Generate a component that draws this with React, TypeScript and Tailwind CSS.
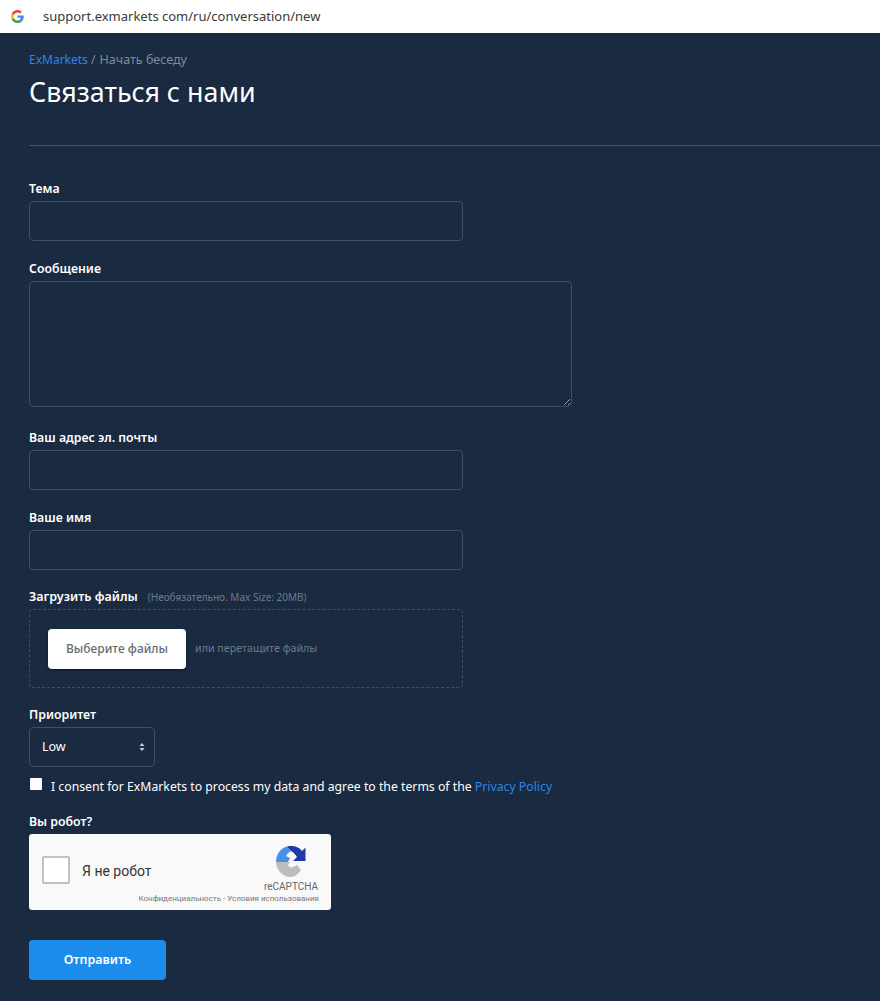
const font = "font-['Noto_Sans','Open_Sans',sans-serif]";
const inputClass =
  "block h-10 w-[434px] rounded border border-[#3d4f68] bg-transparent px-3 text-[13px] text-white outline-none";

function FieldLabel({ children }: { children: React.ReactNode }) {
  return <div className="h-[20px] text-[12.3px] leading-[22px] font-semibold text-white">{children}</div>;
}

function GoogleLogo() {
  return (
    <svg viewBox="0 0 48 48" className="h-[13px] w-[13px]">
      <path fill="#EA4335" d="M24 9.5c3.500 0 6.700 1.200 9.200 3.600l6.900-6.900C35.900 2.400 30.500 0 24 0 14.600 0 6.500 5.400 2.600 13.200l8 6.200C12.500 13.600 17.800 9.500 24 9.500z" />
      <path fill="#4285F4" d="M47 24.500c0-1.600-.1-3.100-.4-4.500H24v9h12.900c-.6 3-2.200 5.500-4.700 7.200l7.700 6c4.500-4.200 7.100-10.300 7.100-17.700z" />
      <path fill="#FBBC05" d="M10.600 28.600c-.5-1.400-.8-3-.8-4.600s.3-3.200.8-4.600l-8-6.200C.9 16.500 0 20.100 0 24s.9 7.500 2.600 10.800l8-6.200z" />
      <path fill="#34A853" d="M24 48c6.500 0 11.900-2.100 15.900-5.800l-7.700-6c-2.200 1.400-4.900 2.300-8.200 2.300-6.200 0-11.500-4.100-13.400-9.900l-8 6.200C6.500 42.600 14.600 48 24 48z" />
    </svg>
  );
}

function RecaptchaLogo() {
  return (
    <svg viewBox="0 0 30 31" className="h-[31px] w-[30px]">
      {/* gray lower half */}
      <path fill="#bdbdbd" d="M0 16H14L12 19c1 2 3 3 5 2 2-.5 3-1.500 3.500-2.500L25 24c-3 4-6 7-10 7C6.700 31 0 24 0 16z" />
      {/* light blue upper left */}
      <path fill="#4a90e8" d="M0 16C0 8 5 2 11 .5L15 5c-2 1-4 3-5 5l4 2-2 4z" />
      {/* dark blue arrow */}
      <path fill="#1c3aa9" d="M11 .5C13 0 14 0 15 0c5 0 9 2 11 5l3.500-3.500V15H17l4-4c-2-3-4-5-6-6z" />
    </svg>
  );
}

export default function App() {
  return (
    <div className={`flex min-h-[1001px] w-[880px] flex-col bg-[#1a2a41] ${font}`}>
      {/* Address bar */}
      <header className="flex h-[33px] items-center bg-white pl-[11px]">
        <GoogleLogo />
        <span className="ml-[19px] text-[13px] text-[#3a3a3a]">support.exmarkets com/ru/conversation/new</span>
      </header>

      <main className="flex flex-col pl-[29px]">
        {/* Heading */}
        <div className="mt-[17px] h-[18px] text-[12px] leading-[20px] text-[#7f8a9a]">
          <span className="text-[#2f86e6]">ExMarkets</span> / <span className="ml-px text-[12.5px]">Начать беседу</span>
        </div>
        <h1 className="mt-[5px] h-[38px] text-[26.800px] leading-[38px] text-white">Связаться с нами</h1>
        <div className="mt-[34px] h-px bg-[#43556d]" />

        {/* Form */}
        <div className="mt-[32px]">
          <FieldLabel>Тема</FieldLabel>
          <input className={`${inputClass} mt-[3px]`} />
        </div>

        <div className="mt-[17px]">
          <FieldLabel>Сообщение</FieldLabel>
          <textarea className="mt-[3px] block h-[126px] w-[543px] rounded border border-[#3d4f68] bg-transparent px-3 py-2 text-[13px] text-white outline-none" />
        </div>

        <div className="mt-[20px]">
          <FieldLabel>Ваш адрес эл. почты</FieldLabel>
          <input className={`${inputClass} mt-[3px]`} />
        </div>

        <div className="mt-[17px]">
          <FieldLabel>Ваше имя</FieldLabel>
          <input className={`${inputClass} mt-[3px]`} />
        </div>

        <div className="mt-[16px]">
          <div className="flex h-[20px] items-center">
            <div className="h-[20px] text-[12.5px] leading-[22px] font-semibold text-white">Загрузить файлы</div>
            <span className="ml-[10px] translate-y-px text-[10px] text-[#6d7a8c]">(Необязательно. Max Size: 20MB)</span>
          </div>
          <div className="mt-[3px] flex h-[79px] w-[434px] items-center rounded-sm border border-dashed border-[#3d4f68] pl-[18px]">
            <button className="h-10 w-[138px] rounded-sm bg-white text-[12px] font-medium text-[#666c74] shadow-[0_1px_2px_rgba(0,0,0,0.5)]">
              Выберите файлы
            </button>
            <span className="ml-[9px] text-[10.7px] text-[#6d7a8c]">или перетащите файлы</span>
          </div>
        </div>

        <div className="mt-[16px]">
          <FieldLabel>Приоритет</FieldLabel>
          <div className="relative mt-[3px] h-10 w-[126px]">
            <select className="h-10 w-full appearance-none rounded border border-[#3d4f68] bg-transparent pl-3 text-[12.5px] text-white outline-none">
              <option className="text-black">Low</option>
            </select>
            <svg viewBox="0 0 6 8" className="pointer-events-none absolute top-[16px] right-[10px] h-[8px] w-[6px]">
              <path fill="#c9ced6" d="M3 0l2.500 3h-5zM3 8L.5 5h5z" />
            </svg>
          </div>
        </div>

        <label className="mt-[9px] flex h-[20px] items-start text-[12.25px] leading-[22px] text-white">
          <input type="checkbox" className="mt-[2px] ml-px h-[12px] w-[12px] appearance-none rounded-[1px] bg-white" />
          <span className="ml-[9px]">
            I consent for ExMarkets to process my data and agree to the terms of the{" "}
            <span className="text-[#2f86e6]">Privacy Policy</span>
          </span>
        </label>

        <div className="mt-[15px]">
          <FieldLabel>Вы робот?</FieldLabel>
        </div>

        {/* reCAPTCHA */}
        <div className="mt-[3px] flex h-[76px] w-[302px] flex-col rounded-[3px] bg-[#f9f9f9] font-['Roboto',sans-serif]">
          <div className="flex h-[60px] items-start">
            <div className="mt-[22px] ml-[13px] h-[28px] w-[28px] rounded-[2px] border-2 border-[#c1c1c1] bg-white" />
            <span className="mt-[27px] ml-[12px] text-[14px] leading-[20px] whitespace-nowrap text-[#333]">Я не робот</span>
            <div className="mt-[12px] mr-[13px] ml-auto flex flex-col items-end">
              <div className="mr-[12px]">
                <RecaptchaLogo />
              </div>
              <span className="mt-[3px] text-[10px] leading-[14px] text-[#666]">reCAPTCHA</span>
            </div>
          </div>
          <div className="mr-[12px] text-right text-[8px] leading-[10px] whitespace-nowrap text-[#777]">
            Конфиденциальность - Условия использования
          </div>
        </div>

        <button className="mt-[30px] h-10 w-[137px] rounded-sm bg-[#1b8cec] text-[12.5px] font-semibold text-white">Отправить</button>
      </main>
    </div>
  );
}
